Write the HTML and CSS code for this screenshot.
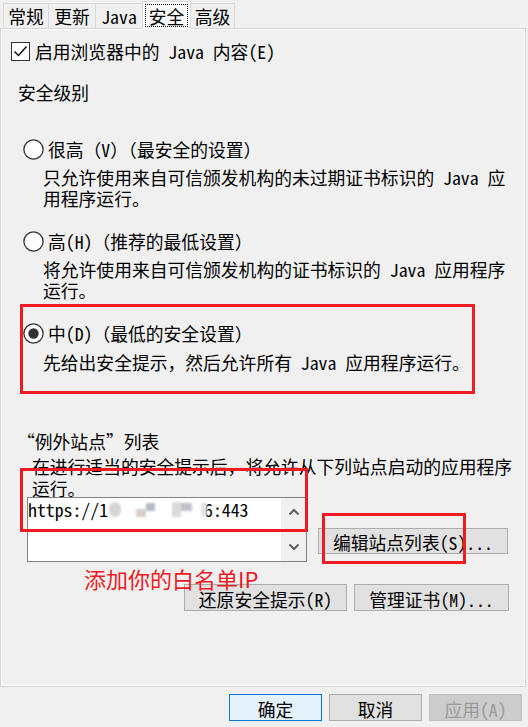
FILE: index.html
```html
<!DOCTYPE html>
<html lang="zh-CN">
<head>
<meta charset="utf-8">
<title>Java 控制面板 - 安全</title>
<link rel="stylesheet" href="styles.css">
</head>
<body>
<div class="dialog">
  <div class="tabs">
    <div class="tab t1">常规</div>
    <div class="tab t2">更新</div>
    <div class="tab t3">Java</div>
    <div class="tab t4 active"><span class="focus">安全</span></div>
    <div class="tab t5">高级</div>
  </div>

  <div class="panel">
    <div class="row cbrow">
      <span class="cb"><svg width="17" height="17" viewBox="0 0 17 17"><path d="M2.5 8.5 L6.5 12.5 L14.5 3.5" fill="none" stroke="#000" stroke-width="1.4"/></svg></span>
      <span>启用浏览器中的 Java 内容(E)</span>
    </div>
    <div class="row label">安全级别</div>

    <div class="row radio r1">
      <svg class="rb" width="21" height="21" viewBox="0 0 21 21"><circle cx="10.5" cy="10.5" r="9.6" fill="#fff" stroke="#333" stroke-width="1.3"/></svg>
      <span>很高（V）（最安全的设置）</span>
    </div>
    <div class="desc d1">只允许使用来自可信颁发机构的未过期证书标识的 Java 应<br>用程序运行。</div>

    <div class="row radio r2">
      <svg class="rb" width="21" height="21" viewBox="0 0 21 21"><circle cx="10.5" cy="10.5" r="9.6" fill="#fff" stroke="#333" stroke-width="1.3"/></svg>
      <span>高(H)（推荐的最低设置）</span>
    </div>
    <div class="desc d2">将允许使用来自可信颁发机构的证书标识的 Java 应用程序<br>运行。</div>

    <div class="row radio r3">
      <svg class="rb" width="21" height="21" viewBox="0 0 21 21"><circle cx="10.5" cy="10.5" r="9.6" fill="#fff" stroke="#333" stroke-width="1.3"/><circle cx="10.5" cy="10.5" r="5.2" fill="#333"/></svg>
      <span>中(D)（最低的安全设置）</span>
    </div>
    <div class="desc d3">先给出安全提示，然后允许所有 Java 应用程序运行。</div>

    <div class="row exlabel"><span class="qo">“</span>例外站点”列表</div>
    <div class="extext">在进行适当的安全提示后，将允许从下列站点启动的应用程序<br>运行。</div>

    <div class="listrow">
      <div class="listbox">
        <div class="items">
          <div class="item">https://1<span class="blur"><i class="b1"></i><i class="b2"></i><i class="b3"></i><i class="b4"></i><i class="b5"></i><i class="b6"></i></span>6:443</div>
        </div>
        <div class="scroll">
          <svg width="12" height="8" viewBox="0 0 12 8"><path d="M1.5 6.5 L6 2 L10.5 6.5" fill="none" stroke="#606060" stroke-width="2"/></svg>
          <svg width="12" height="8" viewBox="0 0 12 8"><path d="M1.5 1.5 L6 6 L10.5 1.5" fill="none" stroke="#606060" stroke-width="2"/></svg>
        </div>
      </div>
      <div class="btn editbtn">编辑站点列表(S)...</div>
    </div>

    <div class="btnrow">
      <div class="btn restore">还原安全提示(R)</div>
      <div class="btn certs">管理证书(M)...</div>
    </div>
  </div>

  <div class="footer">
    <div class="btn fbtn primary">确定</div>
    <div class="btn fbtn">取消</div>
    <div class="btn fbtn disabled">应用(A)</div>
  </div>

  <div class="mark m1"></div>
  <div class="mark m2"></div>
  <div class="mark m3"></div>
  <div class="note">添加你的白名单IP</div>
</div>
</body>
</html>
```

FILE: styles.css
```css
html, body {
  margin: 0;
  padding: 0;
  background: #f0f0f0;
}

body {
  font-family: "Noto Sans Mono CJK SC", "Noto Sans CJK SC", sans-serif;
  font-size: 17.8px;
  color: #000;
  white-space: nowrap;
}

.dialog {
  position: relative;
  width: 528px;
  height: 727px;
  overflow: hidden;
}

/* Tabs */
.tabs {
  display: flex;
  align-items: flex-end;
  height: 28px;
  padding-left: 3px;
}

.tab {
  box-sizing: border-box;
  height: 25px;
  border: 1px solid #d9d9d9;
  border-bottom: none;
  margin-right: -1px;
  display: flex;
  align-items: center;
  justify-content: center;
  line-height: 22px;
  background: #f0f0f0;
}

.t1 { width: 46px; }
.t2 { width: 48px; }
.t3 { width: 48px; }
.t4 { width: 49px; }
.t5 { width: 45px; }

.tab.active {
  height: 28px;
  margin-bottom: -1px;
  position: relative;
  z-index: 1;
  background: #fafafa;
  align-items: stretch;
  padding: 2px 2px 2px 2px;
}

.focus {
  flex: 1;
  border: 1px dotted #000;
  display: flex;
  align-items: center;
  justify-content: center;
}

/* Panel */
.panel {
  box-sizing: border-box;
  width: 526px;
  height: 659px;
  border: 1px solid #d6d6d6;
  box-shadow: inset 1px 1px #ffffff, inset -1px -1px #ffffff;
  display: flex;
  flex-direction: column;
}

.row {
  display: flex;
  align-items: center;
  height: 21px;
  line-height: 21px;
}

.cbrow {
  margin-top: 12px;
}

.cb {
  box-sizing: border-box;
  width: 19px;
  height: 19px;
  border: 1px solid #333;
  background: #fff;
  margin-left: 10px;
  margin-right: 5px;
  display: flex;
}

.label {
  margin-top: 20px;
  margin-left: 17px;
}

.radio .rb {
  margin-left: 22px;
  margin-right: 4px;
  margin-top: -1px;
  flex: none;
}

.r1 { margin-top: 36px; }
.r2 { margin-top: 22px; }
.r3 { margin-top: 22px; }

.desc {
  margin-left: 42px;
  line-height: 21px;
  margin-top: 7px;
}

.d3 { margin-top: 8px; }

.exlabel {
  margin-top: 58px;
  margin-left: 23px;
}

.qo { margin-left: -7px; }

.extext {
  margin-top: 3px;
  margin-left: 31px;
  line-height: 22px;
}

/* List of exception sites */
.listrow {
  display: flex;
  align-items: flex-start;
  margin-top: -2px;
  margin-left: 26px;
}

.listbox {
  box-sizing: border-box;
  width: 280px;
  height: 65px;
  border: 1px solid #828282;
  background: #fff;
  display: flex;
}

.items {
  flex: 1;
  padding-top: 1px;
}

.item {
  line-height: 21px;
  display: flex;
  align-items: center;
}

.blur {
  display: inline-flex;
  align-items: center;
  width: 96px;
  height: 20px;
  filter: blur(1.3px);
}

.blur i {
  display: block;
  flex: none;
}

.b1 { margin-left: 1px; width: 12px; height: 15px; background: #d6d6d6; border-radius: 6px; }
.b2 { margin-left: 15px; width: 10px; height: 8px; background: #d8cfca; align-self: flex-end; margin-bottom: 3px; }
.b3 { width: 9px; height: 8px; background: #b8bbc4; align-self: flex-start; margin-top: 3px; }
.b4 { margin-left: 17px; width: 9px; height: 15px; background: #dadada; }
.b5 { width: 11px; height: 8px; background: #c1c1c9; align-self: flex-start; margin-top: 3px; }
.b6 { margin-left: 9px; width: 6px; height: 15px; background: #e4e4e4; border-radius: 3px; }

.scroll {
  width: 25px;
  background: #f0f0f0;
  display: flex;
  flex-direction: column;
  justify-content: space-between;
  align-items: center;
  padding: 10px 0;
}

/* Buttons */
.btn {
  box-sizing: border-box;
  border: 1px solid #adadad;
  background: #e1e1e1;
  display: flex;
  align-items: center;
  justify-content: center;
  line-height: 20px;
  padding-top: 2px;
}

.editbtn {
  margin-left: 11px;
  margin-top: 31px;
  width: 190px;
  height: 26px;
}

.btnrow {
  display: flex;
  justify-content: flex-end;
  gap: 7px;
  margin-top: 22px;
  margin-right: 16px;
}

.restore { width: 163px; height: 27px; }
.certs { width: 155px; height: 27px; }

.footer {
  display: flex;
  justify-content: flex-end;
  gap: 7px;
  margin-top: 7px;
  padding-right: 6px;
}

.fbtn {
  width: 93px;
  height: 27px;
}

.primary {
  border-color: #0078d7;
  background: #e5f1fb;
}

.disabled {
  border-color: #bfbfbf;
  background: #cccccc;
  color: #9a9a9a;
}

/* Red annotations drawn over the screenshot */
.mark {
  position: absolute;
  box-sizing: border-box;
  border: 3px solid #ed1c24;
}

.m1 { left: 20px; top: 304px; width: 455px; height: 90px; }
.m2 { left: 20px; top: 468px; width: 288px; height: 64px; }
.m3 { left: 322px; top: 513px; width: 144px; height: 51px; }

.note {
  position: absolute;
  left: 84px;
  top: 565px;
  font-family: "Noto Sans CJK SC", sans-serif;
  font-size: 22px;
  line-height: 26px;
  color: #ed1c24;
}
```
